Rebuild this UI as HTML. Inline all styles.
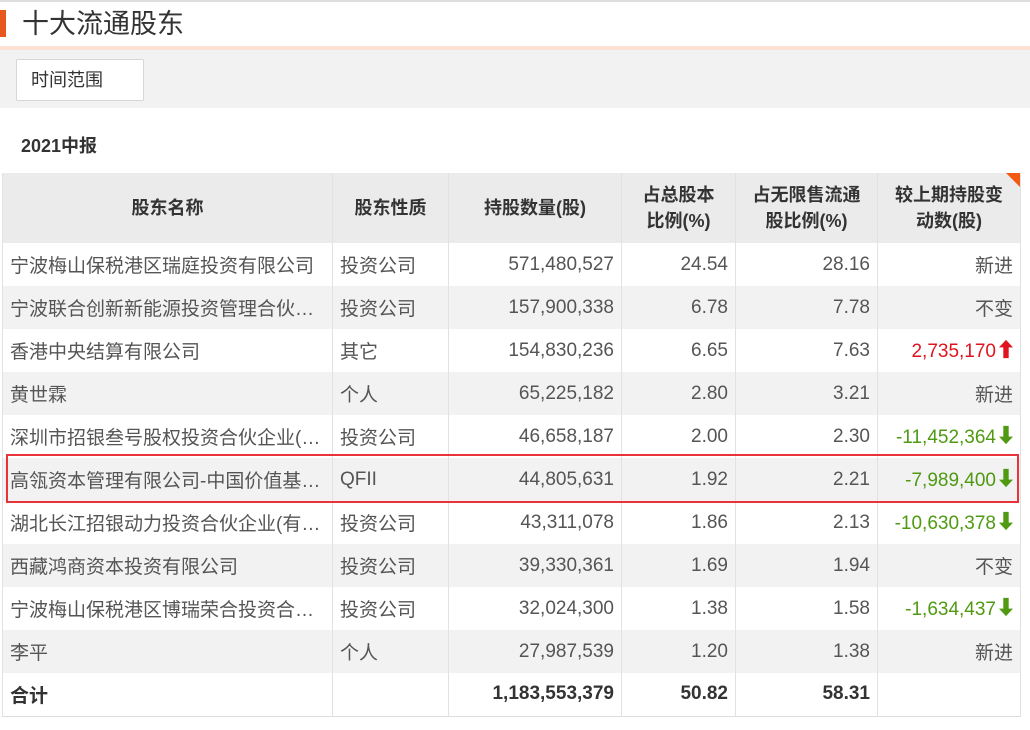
<!DOCTYPE html>
<html><head><meta charset="utf-8"><style>
*{margin:0;padding:0;box-sizing:border-box}
body{width:1030px;height:730px;background:#fff;font-family:"Liberation Sans","Noto Sans CJK SC",sans-serif;position:relative;overflow:hidden;color:#555}
.top{position:absolute;left:0;top:0;width:1030px;height:2px;background:#ddd}
.bar{position:absolute;left:0;top:10px;width:6px;height:27px;background:#e8571e}
.title{position:absolute;left:22px;top:6px;font-size:27px;color:#333;line-height:36px}
.peach{position:absolute;left:0;top:46px;width:1030px;height:4px;background:#fde2d4}
.band{position:absolute;left:0;top:50px;width:1030px;height:58px;background:#f2f2f2}
.btn{position:absolute;left:16px;top:59px;width:128px;height:42px;background:#fff;border:1px solid #d6d6d6;border-radius:2px;font-size:18px;color:#333;line-height:40px;padding-left:14px}
.rep{position:absolute;left:21px;top:132px;font-size:18px;font-weight:bold;color:#333}
table{position:absolute;left:2px;top:173px;border-collapse:collapse;font-size:19px;table-layout:fixed;width:1018px;border-left:1px solid #e2e2e2}
td{height:43px;border-right:1px solid #e2e2e2;padding:0 7px;white-space:nowrap;overflow:hidden;text-overflow:ellipsis}
tr.h td{height:70px;background:#ebebeb;font-weight:bold;color:#333;text-align:center;line-height:26px;font-size:18px}
tr.g td{background:#f2f2f2}
td.r{text-align:right}
tr.t td{font-weight:bold;color:#333;border-bottom:1px solid #ddd}
.red{color:#e0141e}.grn{color:#4f9a12}
.ar{display:inline-block;vertical-align:-2px;margin-left:3px}
.box{position:absolute;left:6px;top:454px;width:1013px;height:49px;border:2px solid #e8333a}
.tri{position:absolute;left:1006px;top:173px;width:0;height:0;border-top:14px solid #f25a14;border-left:14px solid transparent}
</style></head><body>
<div class="top"></div><div class="bar"></div><div class="title">十大流通股东</div>
<div class="peach"></div><div class="band"></div><div class="btn">时间范围</div>
<div class="rep">2021中报</div>
<table>
<colgroup><col style="width:330px"><col style="width:116px"><col style="width:173px"><col style="width:114px"><col style="width:142px"><col style="width:143px"></colgroup>
<tr class="h"><td>股东名称</td><td>股东性质</td><td>持股数量(股)</td><td>占总股本<br>比例(%)</td><td>占无限售流通<br>股比例(%)</td><td>较上期持股变<br>动数(股)</td></tr>
<tr><td>宁波梅山保税港区瑞庭投资有限公司</td><td>投资公司</td><td class="r">571,480,527</td><td class="r">24.54</td><td class="r">28.16</td><td class="r">新进</td></tr>
<tr class="g"><td>宁波联合创新新能源投资管理合伙企业</td><td>投资公司</td><td class="r">157,900,338</td><td class="r">6.78</td><td class="r">7.78</td><td class="r">不变</td></tr>
<tr><td>香港中央结算有限公司</td><td>其它</td><td class="r">154,830,236</td><td class="r">6.65</td><td class="r">7.63</td><td class="r red">2,735,170<svg class="ar" width="14" height="20" viewBox="0 0 13 17"><path d="M6.5 0L13 7H9V17H4V7H0Z" fill="#e0141e"/></svg></td></tr>
<tr class="g"><td>黄世霖</td><td>个人</td><td class="r">65,225,182</td><td class="r">2.80</td><td class="r">3.21</td><td class="r">新进</td></tr>
<tr><td>深圳市招银叁号股权投资合伙企业(有限合伙)</td><td>投资公司</td><td class="r">46,658,187</td><td class="r">2.00</td><td class="r">2.30</td><td class="r grn">-11,452,364<svg class="ar" width="14" height="20" viewBox="0 0 13 17"><path d="M6.5 17L13 10H9V0H4V10H0Z" fill="#4f9a12"/></svg></td></tr>
<tr class="g"><td>高瓴资本管理有限公司-中国价值基金(交易所)</td><td>QFII</td><td class="r">44,805,631</td><td class="r">1.92</td><td class="r">2.21</td><td class="r grn">-7,989,400<svg class="ar" width="14" height="20" viewBox="0 0 13 17"><path d="M6.5 17L13 10H9V0H4V10H0Z" fill="#4f9a12"/></svg></td></tr>
<tr><td>湖北长江招银动力投资合伙企业(有限合伙)</td><td>投资公司</td><td class="r">43,311,078</td><td class="r">1.86</td><td class="r">2.13</td><td class="r grn">-10,630,378<svg class="ar" width="14" height="20" viewBox="0 0 13 17"><path d="M6.5 17L13 10H9V0H4V10H0Z" fill="#4f9a12"/></svg></td></tr>
<tr class="g"><td>西藏鸿商资本投资有限公司</td><td>投资公司</td><td class="r">39,330,361</td><td class="r">1.69</td><td class="r">1.94</td><td class="r">不变</td></tr>
<tr><td>宁波梅山保税港区博瑞荣合投资合伙企业</td><td>投资公司</td><td class="r">32,024,300</td><td class="r">1.38</td><td class="r">1.58</td><td class="r grn">-1,634,437<svg class="ar" width="14" height="20" viewBox="0 0 13 17"><path d="M6.5 17L13 10H9V0H4V10H0Z" fill="#4f9a12"/></svg></td></tr>
<tr class="g"><td>李平</td><td>个人</td><td class="r">27,987,539</td><td class="r">1.20</td><td class="r">1.38</td><td class="r">新进</td></tr>
<tr class="t"><td>合计</td><td></td><td class="r">1,183,553,379</td><td class="r">50.82</td><td class="r">58.31</td><td></td></tr>
</table>
<div class="tri"></div>
<div class="box"></div>
</body></html>
